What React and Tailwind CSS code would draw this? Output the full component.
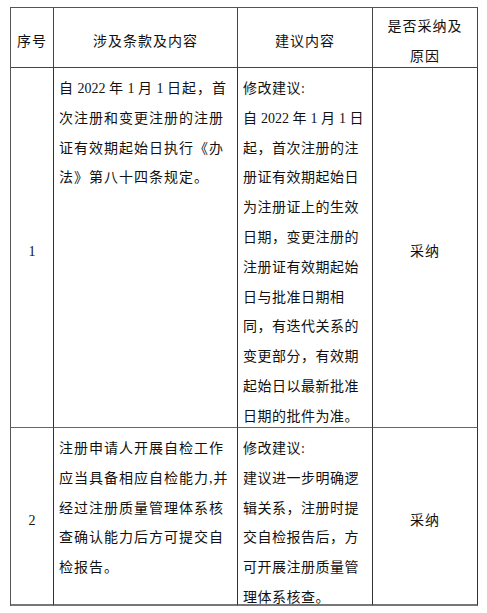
import React from 'react';

// 每一行按原文档的换行拆开，保证断行位置一致
const ROWS = [
  {
    no: '1',
    clause: [
      '自 2022 年 1 月 1 日起，首',
      '次注册和变更注册的注册',
      '证有效期起始日执行《办',
      '法》第八十四条规定。',
    ],
    advice: [
      '修改建议:',
      '自 2022 年 1 月 1 日',
      '起，首次注册的注',
      '册证有效期起始日',
      '为注册证上的生效',
      '日期，变更注册的',
      '注册证有效期起始',
      '日与批准日期相',
      '同，有迭代关系的',
      '变更部分，有效期',
      '起始日以最新批准',
      '日期的批件为准。',
    ],
    result: '采纳',
  },
  {
    no: '2',
    clause: [
      '注册申请人开展自检工作',
      '应当具备相应自检能力,并',
      '经过注册质量管理体系核',
      '查确认能力后方可提交自',
      '检报告。',
    ],
    advice: [
      '修改建议:',
      '建议进一步明确逻',
      '辑关系，注册时提',
      '交自检报告后，方',
      '可开展注册质量管',
      '理体系核查。',
    ],
    result: '采纳',
  },
];

const font = { fontFamily: '"Liberation Serif", "Noto Sans CJK SC", serif' };

// 数字和空格不加字距，中文字加字距
function Line({ text }) {
  const parts = text.split(/([0-9 ]+)/).filter(Boolean);
  return (
    <div>
      {parts.map((p, i) =>
        /^[0-9 ]+$/.test(p) ? (
          <span key={i} className="tracking-normal whitespace-pre">{p}</span>
        ) : (
          <span key={i}>{p}</span>
        )
      )}
    </div>
  );
}

function Lines({ lines, tracking }) {
  return (
    <div className={`leading-[29.8px] whitespace-nowrap ${tracking}`}>
      {lines.map((line, i) => (
        <Line key={i} text={line} />
      ))}
    </div>
  );
}

export default function App() {
  return (
    <div className="w-[487px] h-[613px] bg-white pt-[7px] pl-[10px] text-[14px] text-[#111]" style={font}>
      <div className="grid grid-cols-[43px_184px_135px_105px] grid-rows-[60px_360px_178px] w-max border-t border-l border-[#555]">
        {/* 表头 */}
        <div className="flex items-center justify-center pt-[9px] border-r border-b border-[#444] leading-[29.6px] tracking-[1px]">序号</div>
        <div className="flex items-center justify-center pt-[9px] border-r border-b border-[#444] leading-[29.6px] tracking-[1px]">涉及条款及内容</div>
        <div className="flex items-center justify-center pt-[9px] border-r border-b border-[#444] leading-[29.6px] tracking-[1px]">建议内容</div>
        <div className="flex flex-col items-center justify-center pt-[9px] border-r border-b border-[#444] leading-[29.6px] tracking-[1px]">
          <div>是否采纳及</div>
          <div>原因</div>
        </div>

        {ROWS.map((row, idx) => {
          const last = idx === ROWS.length - 1;
          const bottom = last ? 'border-b-2 border-b-[#777]' : 'border-b border-b-[#666]';
          return (
            <React.Fragment key={row.no}>
              <div className={`flex items-center justify-center pt-[9px] border-r border-[#333] ${bottom} leading-[29.6px]`}>{row.no}</div>
              <div className={`pt-[6px] pl-[5px] border-r border-[#333] ${bottom}`}>
                <Lines lines={row.clause} tracking="tracking-[1px]" />
              </div>
              <div className={`pt-[6px] pl-[5px] border-r border-[#333] ${bottom}`}>
                <Lines lines={row.advice} tracking="tracking-[0.5px]" />
              </div>
              <div className={`flex items-center justify-center pt-[9px] border-r border-[#333] ${bottom} leading-[29.6px] tracking-[1px]`}>{row.result}</div>
            </React.Fragment>
          );
        })}
      </div>
    </div>
  );
}
